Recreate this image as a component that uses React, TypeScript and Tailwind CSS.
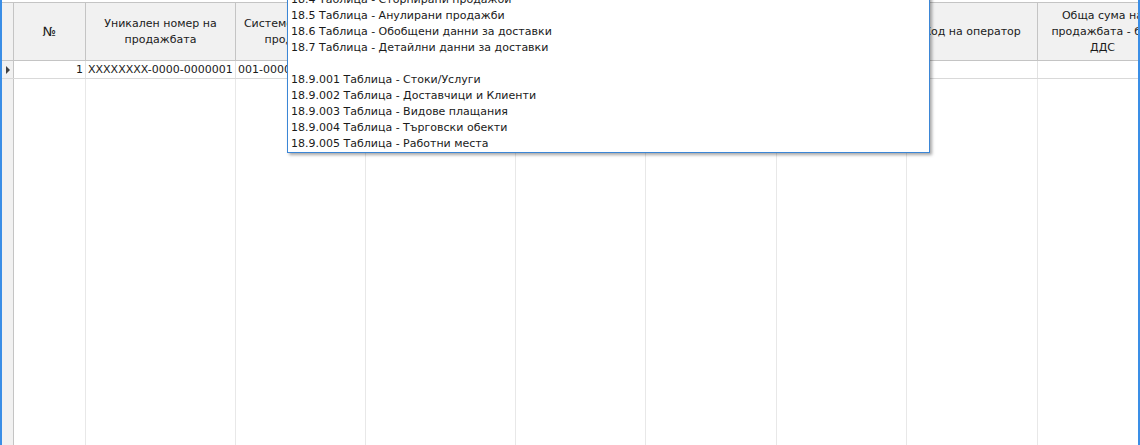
import React from "react";

const cols = [
  { w: 72, title: ["№"], v: "1", align: "right" },
  { w: 150, title: ["Уникален номер на", "продажбата"], v: "XXXXXXXX-0000-0000001", align: "left" },
  { w: 130, title: ["Системен номер на", "продажбата"], v: "001-0000001", align: "left" },
  { w: 150, title: ["Дата и час", "на продажбата"], v: "", align: "left" },
  { w: 130, title: ["Код на", "касата"], v: "", align: "left" },
  { w: 131, title: ["Номер на", "касата"], v: "", align: "left" },
  { w: 130, title: ["Код на", "търговски обект"], v: "", align: "left" },
  { w: 131, title: ["Код на оператор"], v: "000", align: "left" },
  { w: 130, title: ["Обща сума на", "продажбата - без", "ДДС"], v: "", align: "left" },
];

const items = [
  "18.4 Таблица - Сторнирани продажби",
  "18.5 Таблица - Анулирани продажби",
  "18.6 Таблица - Обобщени данни за доставки",
  "18.7 Таблица - Детайлни данни за доставки",
  "",
  "18.9.001 Таблица - Стоки/Услуги",
  "18.9.002 Таблица - Доставчици и Клиенти",
  "18.9.003 Таблица - Видове плащания",
  "18.9.004 Таблица - Търговски обекти",
  "18.9.005 Таблица - Работни места",
];

export default function App() {
  return (
    <div
      className="relative w-[1140px] h-[445px] overflow-hidden bg-white border-l-2 border-r-2 border-[#3a8ee6] text-[11px] text-[#1a1a1a]"
      style={{ fontFamily: '"DejaVu Sans", Verdana, sans-serif' }}
    >
      <div className="flex flex-col h-full pt-[2px]">
        {/* header */}
        <div className="flex h-[59px] shrink-0 border-t border-b border-[#c4c4c4] bg-[#f1f1f1]">
          <div className="w-[12px] shrink-0 border-r border-[#c4c4c4]" />
          {cols.map((c, i) => (
            <div
              key={i}
              className="shrink-0 border-r border-[#c4c4c4] flex flex-col items-center justify-center leading-[16px] text-center whitespace-nowrap overflow-hidden"
              style={{ width: c.w }}
            >
              {c.title.map((t, j) => (
                <span key={j} className={t === "№" ? "text-[13px]" : ""}>{t}</span>
              ))}
            </div>
          ))}
        </div>
        {/* row 1 */}
        <div className="flex h-[18px] shrink-0 border-b border-[#d9d9d9]">
          <div className="w-[12px] shrink-0 border-r border-[#c4c4c4] bg-[#f1f1f1] flex items-center justify-center">
            <svg width="4" height="8" viewBox="0 0 4 8">
              <path d="M0 0 L4 4 L0 8 Z" fill="#404040" />
            </svg>
          </div>
          {cols.map((c, i) => (
            <div
              key={i}
              className={`shrink-0 border-r border-[#e2e2e2] px-[2px] leading-[17px] whitespace-nowrap overflow-hidden ${
                c.align === "right" ? "text-right" : "text-left"
              }`}
              style={{ width: c.w }}
            >
              {c.v}
            </div>
          ))}
        </div>
        {/* empty area */}
        <div className="flex flex-1">
          <div className="w-[12px] shrink-0 border-r border-[#c4c4c4] bg-[#f1f1f1]" />
          {cols.map((c, i) => (
            <div key={i} className="shrink-0 border-r border-[#e8e8e8]" style={{ width: c.w }} />
          ))}
        </div>
      </div>

      {/* dropdown list */}
      <div className="absolute left-[285px] top-[-9px] w-[643px] bg-white border border-[#3b86d6] shadow-[2px_2px_3px_rgba(0,0,0,0.35)] pl-[3px]">
        {items.map((t, i) => (
          <div key={i} className="h-[16px] leading-[16px] whitespace-nowrap">
            {t}
          </div>
        ))}
      </div>
    </div>
  );
}
